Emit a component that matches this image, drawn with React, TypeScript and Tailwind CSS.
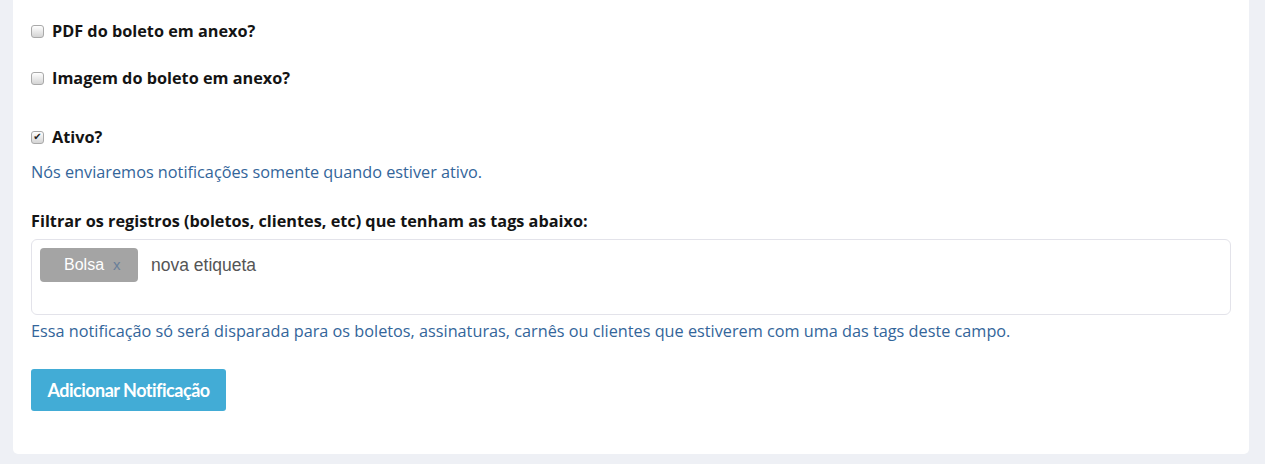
const CheckBox = ({ checked }: { checked?: boolean }) => (
  <span
    className="
    w-[13px] h-[13px] shrink-0 relative
    rounded-[3px] border border-[#a9a9a9]
    bg-gradient-to-b from-[#ffffff] to-[#d4d4d4]
    flex items-center justify-center"
  >
    {checked && (
      <span className="text-[10px] leading-none text-[#222] font-['DejaVu_Sans'] -mt-px">
        ✔
      </span>
    )}
  </span>
);

const CheckRow = ({
  label,
  checked,
  className,
}: {
  label: string;
  checked?: boolean;
  className?: string;
}) => (
  <label className={`flex items-center gap-[8px] ${className ?? ""}`}>
    <CheckBox checked={checked} />
    <span className="text-[16.25px] font-bold text-[#141414] leading-[20px]">
      {label}
    </span>
  </label>
);

const App = () => {
  return (
    <div className="w-[1265px] h-[464px] bg-[#eef0f5] pl-[13px] pr-[16px] pb-[10px] overflow-hidden font-['Open_Sans',sans-serif]">
      <div className="bg-white rounded-b-[5px] h-full pl-[18px] pr-[18px] pt-[21px]">
        <CheckRow label="PDF do boleto em anexo?" />
        <CheckRow label="Imagem do boleto em anexo?" className="mt-[27px]" />
        <CheckRow label="Ativo?" checked className="mt-[39px]" />

        <p className="mt-[15px] text-[16.25px] leading-[20px] text-[#33659a]">
          Nós enviaremos notificações somente quando estiver ativo.
        </p>

        <p className="mt-[29px] text-[16.25px] leading-[20px] font-bold text-[#141414]">
          Filtrar os registros (boletos, clientes, etc) que tenham as tags abaixo:
        </p>

        <div className="mt-[8px] h-[76px] border border-[#e3e3ea] rounded-[6px] pl-[8px] pt-[8px] flex items-start gap-[13px] font-['Liberation_Sans',sans-serif]">
          <span className="h-[34px] w-[98px] bg-[#a4a4a4] rounded-[4px] flex items-center pl-[24px] text-[16px] text-white">
            Bolsa
            <span className="ml-[9px] text-[#6a7f99] text-[15px]">x</span>
          </span>
          <span className="text-[17.5px] text-[#555] leading-[34px]">
            nova etiqueta
          </span>
        </div>

        <p className="mt-[6px] text-[16.25px] leading-[20px] text-[#33659a]">
          Essa notificação só será disparada para os boletos, assinaturas,
          carnês ou clientes que estiverem com uma das tags deste campo.
        </p>

        <button className="mt-[28px] h-[42px] w-[195px] bg-[#42acd6] rounded-[3px] text-white text-[18px] font-bold tracking-[-0.5px] font-['Lato',sans-serif]">
          Adicionar Notificação
        </button>
      </div>
    </div>
  );
};

export default App;
